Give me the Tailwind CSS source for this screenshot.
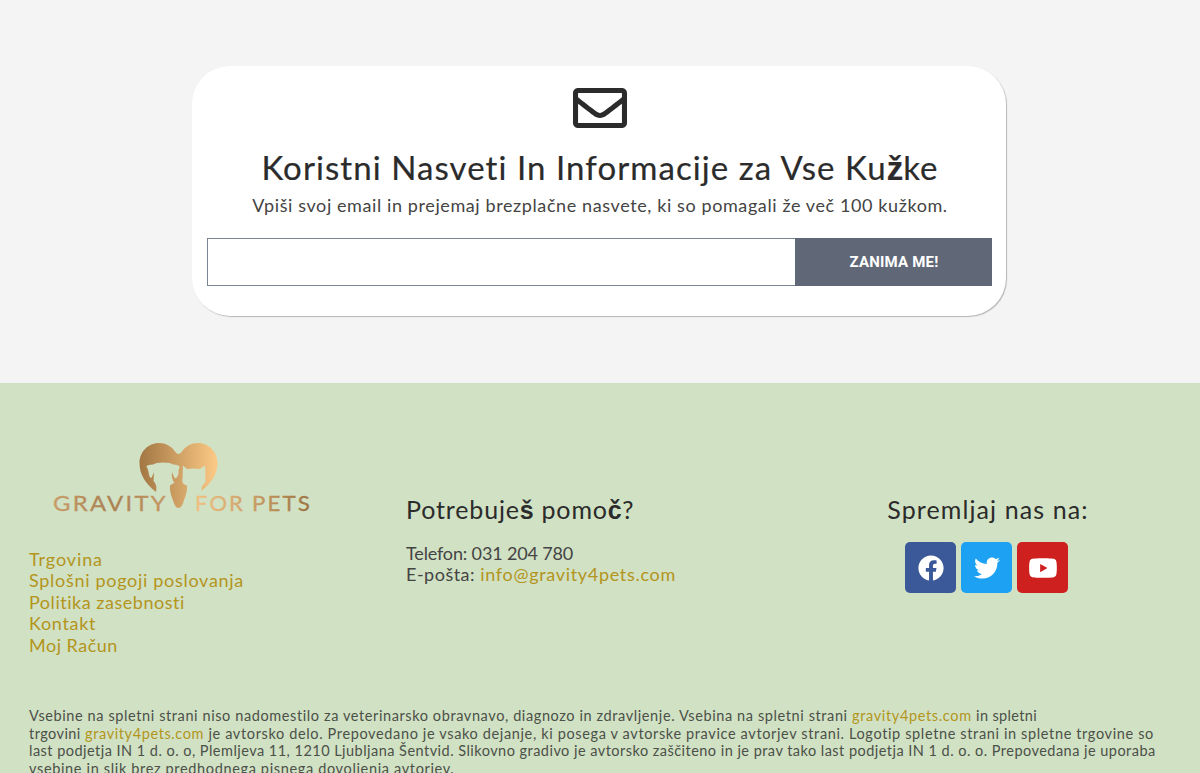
<!DOCTYPE html>
<html lang="sl"><head><meta charset="utf-8"><title>Gravity for Pets</title>
<script src="https://cdn.jsdelivr.net/npm/@tailwindcss/browser@4"></script></head>
<body class="h-[773px] overflow-hidden bg-[#f4f4f4] font-['Lato',sans-serif] text-[#2b2b2b]">
<section class="flex h-[383px] justify-center pt-[66px] pr-[2px]">
<div class="flex h-[250px] w-[814px] flex-col items-center rounded-[38px] bg-white px-[15px] pt-[22px] shadow-[1px_1px_1px_rgba(0,0,0,0.25)]">
<svg class="ml-[2px] h-[40px] w-[54px]" viewBox="0 64 512 384" preserveAspectRatio="none" fill="#2b2b2b"><path d="M464 64H48C21.490 64 0 85.490 0 112v288c0 26.510 21.490 48 48 48h416c26.510 0 48-21.490 48-48V112c0-26.510-21.490-48-48-48zm0 48v40.805c-22.422 18.259-58.168 46.651-134.587 106.490-16.841 13.247-50.201 45.072-73.413 44.701-23.208.375-56.579-31.459-73.413-44.701C106.180 199.465 70.425 171.067 48 152.805V112h416zM48 400V214.398c22.914 18.251 55.409 43.862 104.938 82.646 21.857 17.205 60.134 55.186 103.062 54.955 42.717.231 80.509-37.199 103.053-54.947 49.528-38.783 82.032-64.401 104.947-82.653V400H48z"/></svg>
<h2 class="mt-[18px] ml-[2px] text-[33px] leading-[42px] tracking-[1.07px] whitespace-nowrap [-webkit-text-stroke:0.2px]">Koristni Nasveti In Informacije za Vse Ku<b class="font-['Liberation_Sans',sans-serif] font-bold tracking-normal">ž</b>ke</h2>
<p class="mt-[4px] ml-[2px] text-[18px] leading-[22px] tracking-[0.6px] whitespace-nowrap text-[#444]">Vpiši svoj email in prejemaj brezplačne nasvete, ki so pomagali že več 100 kužkom.</p>
<form class="mt-[22px] flex h-[48px] w-[785px]"><input class="w-[588px] border border-r-0 border-[#7b8492] bg-white"><button type="button" class="flex-1 bg-[#606878] pl-[2px] font-['Roboto',sans-serif] text-[15px] font-bold tracking-[0.2px] text-white">ZANIMA ME!</button></form>
</div></section>
<footer class="h-[390px] bg-[#d1e1c4]">
<div class="flex h-[324px]">
<div class="w-[378px] pt-[57px] pl-[29px]">
<svg class="ml-[21px] h-[76px] w-[264px]" viewBox="50 440 264 76">
<defs><linearGradient id="h" gradientUnits="userSpaceOnUse" x1="140" x2="217" y1="0" y2="0"><stop stop-color="#a37743"/><stop offset="1" stop-color="#fcca86"/></linearGradient>
<linearGradient id="a" gradientUnits="userSpaceOnUse" x1="53" x2="166" y1="0" y2="0"><stop stop-color="#c99d68"/><stop offset=".5" stop-color="#a98050"/><stop offset="1" stop-color="#c59863"/></linearGradient>
<linearGradient id="b" gradientUnits="userSpaceOnUse" x1="195" x2="309" y1="0" y2="0"><stop stop-color="#f0c181"/><stop offset=".4" stop-color="#d3a66c"/><stop offset="1" stop-color="#9d7442"/></linearGradient></defs>
<path fill="url(#h)" d="M178.500 454Q177 454 175 451.500C171 446 166 443 159 443C148 443 139.500 452 139.500 463C139.500 475 146 484 156 492Q157.500 485 153.500 481L154 472L151.500 478C148 477 149.500 471 146.500 466.500Q146.500 465 153 464.500Q156 462.500 163 462.500Q171 462.500 173 464.500Q179.500 465 179.500 467Q178 470 178.500 474Q177 479 174.500 478L172 472Q171 479 174.500 482.500L170 485.500Q169.500 492 172.500 499Q175 508 178.500 508Q182 508 184 500Q187.500 492 187 485.500Q181 484 182.500 479L183 465.500L187 469Q194 468 200 469L205 465.500L205.500 479Q206.500 482 202 486L201.500 491C211 483 217.500 475 217.500 463C217.500 452 209 443 198 443C191 443 186 446 182 451.500Q180 454 178.500 454Z"/>
<g font-family="Lato, sans-serif" font-size="20.5" letter-spacing="2" stroke-width=".3"><text x="53" y="511" textLength="115" lengthAdjust="spacingAndGlyphs" fill="url(#a)" stroke="url(#a)">GRAVITY</text><text x="195" y="511" textLength="50" lengthAdjust="spacingAndGlyphs" fill="url(#b)" stroke="url(#b)">FOR</text><text x="252" y="511" textLength="60" lengthAdjust="spacingAndGlyphs" fill="url(#b)" stroke="url(#b)">PETS</text></g></svg>
<ul class="mt-[33px] text-[18px] leading-[21.4px] tracking-[0.7px] whitespace-nowrap text-[#b3951c]"><li class="tracking-[0.9px]">Trgovina</li><li>Splošni pogoji poslovanja</li><li class="tracking-[0.53px]">Politika zasebnosti</li><li>Kontakt</li><li class="tracking-[0.5px]">Moj Račun</li></ul>
</div>
<div class="w-[396px] pt-[110px] pl-[28px]"><h3 class="text-[25px] leading-[32px] tracking-[0.85px] whitespace-nowrap">Potrebuje<b class="font-['Liberation_Sans',sans-serif] tracking-[0.5px]">š</b> pomo<b class="font-['Liberation_Sans',sans-serif] tracking-[0.5px]">č</b>?</h3>
<p class="mt-[17px] text-[18px] leading-[21.4px] whitespace-nowrap text-[#444]"><span class="tracking-[-0.15px]">Telefon: 031 204 780</span><br><span class="tracking-[0.5px]">E-pošta: </span><a class="tracking-[0.69px] text-[#b3951c]">info@gravity4pets.com</a></p></div>
<div class="flex w-[426px] flex-col items-center pt-[110px]"><h3 class="ml-[2px] text-[25px] leading-[32px] tracking-[1.1px] whitespace-nowrap">Spremljaj nas na:</h3>
<div class="mt-[17px] mr-[1px] flex gap-[5px]">
<a class="flex size-[51px] items-center justify-center rounded-[5px] bg-[#3b5998]"><svg class="size-[26px]" viewBox="0 0 512 512" fill="#fff"><path d="M504 256C504 119 393 8 256 8S8 119 8 256c0 123.780 90.690 226.380 209.250 245V327.690h-63V256h63v-54.640c0-62.150 37-96.480 93.670-96.480 27.140 0 55.520 4.840 55.520 4.840v61h-31.280c-30.800 0-40.410 19.120-40.410 38.730V256h68.780l-11 71.690h-57.780V501C413.310 482.380 504 379.780 504 256z"/></svg></a>
<a class="flex size-[51px] items-center justify-center rounded-[5px] bg-[#1da1f2]"><svg class="size-[26px]" viewBox="0 0 512 512" fill="#fff"><path d="M459.370 151.716c.325 4.548.325 9.097.325 13.645 0 138.720-105.583 298.558-298.558 298.558-59.452 0-114.680-17.219-161.137-47.106 8.447.974 16.568 1.299 25.340 1.299 49.055 0 94.213-16.568 130.274-44.832-46.132-.975-84.792-31.188-98.112-72.772 6.498.974 12.995 1.624 19.818 1.624 9.421 0 18.843-1.300 27.614-3.573-48.081-9.747-84.143-51.980-84.143-102.985v-1.299c13.969 7.797 30.214 12.670 47.431 13.319-28.264-18.843-46.781-51.005-46.781-87.391 0-19.492 5.197-37.360 14.294-52.954 51.655 63.675 129.300 105.258 216.365 109.807-1.624-7.797-2.599-15.918-2.599-24.040 0-57.828 46.782-104.934 104.934-104.934 30.213 0 57.502 12.670 76.670 33.137 23.715-4.548 46.456-13.320 66.599-25.340-7.798 24.366-24.366 44.833-46.132 57.827 21.117-2.273 41.584-8.122 60.426-16.243-14.292 20.791-32.161 39.308-52.628 54.253z"/></svg></a>
<a class="flex size-[51px] items-center justify-center rounded-[5px] bg-[#cd201f]"><svg class="h-[26px] w-[30px]" viewBox="0 0 576 512" fill="#fff"><path d="M549.655 124.083c-6.281-23.650-24.787-42.276-48.284-48.597C458.781 64 288 64 288 64S117.220 64 74.629 75.486c-23.497 6.322-42.003 24.947-48.284 48.597-11.412 42.867-11.412 132.305-11.412 132.305s0 89.438 11.412 132.305c6.281 23.650 24.787 41.500 48.284 47.821C117.220 448 288 448 288 448s170.780 0 213.371-11.486c23.497-6.321 42.003-24.171 48.284-47.821 11.412-42.867 11.412-132.305 11.412-132.305s0-89.438-11.412-132.305zm-317.510 213.508V175.185l142.739 81.205-142.739 81.201z"/></svg></a>
</div></div></div>
<div class="pl-[29px] text-[14.5px] leading-[17.7px] whitespace-nowrap text-[#4b5048]">
<p class="tracking-[0.6px]">Vsebine na spletni strani niso nadomestilo za veterinarsko obravnavo, diagnozo in zdravljenje. Vsebina na spletni strani <a class="tracking-[0.65px] text-[#b3951c]">gravity4pets.com</a> <span class="tracking-[0.35px]">in spletni</span></p>
<p class="tracking-[0.635px]"><span class="tracking-[0.43px]">trgovini</span> <a class="tracking-[0.6px] text-[#b3951c]">gravity4pets.com</a> je avtorsko delo. Prepovedano je vsako dejanje, ki posega v avtorske pravice avtorjev strani. Logotip spletne strani in spletne trgovine so</p>
<p class="tracking-[0.467px]">last podjetja IN 1 d. o. o, Plemljeva 11, 1210 Ljubljana Šentvid. Slikovno gradivo je avtorsko zaščiteno in je prav tako last podjetja IN 1 d. o. o. Prepovedana je uporaba</p>
<p class="tracking-[0.65px]">vsebine in slik brez predhodnega pisnega dovoljenja avtorjev.</p></div>
</footer>
</body></html>
